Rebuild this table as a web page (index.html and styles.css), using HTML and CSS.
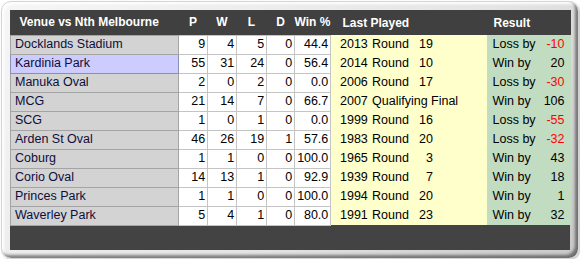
FILE: index.html
```html
<!DOCTYPE html>
<html>
<head>
<meta charset="utf-8">
<link rel="stylesheet" href="styles.css">
</head>
<body>
<div class="frame">
  <div class="panel">
    <table class="grid">
      <colgroup>
        <col class="c-venue"><col class="c-n1"><col class="c-n2"><col class="c-n3"><col class="c-n4"><col class="c-pct"><col class="c-last"><col class="c-res">
      </colgroup>
      <thead>
        <tr>
          <th class="h-venue">Venue vs Nth Melbourne</th>
          <th>P</th><th>W</th><th>L</th><th>D</th><th>Win %</th>
          <th class="h-last">Last Played</th>
          <th class="h-res">Result</th>
        </tr>
      </thead>
      <tbody>
        <tr><td class="v">Docklands Stadium</td><td class="n">9</td><td class="n">4</td><td class="n">5</td><td class="n">0</td><td class="n">44.4</td><td class="lp"><span class="yr">2013</span><span class="rd">Round</span><span class="no">19</span></td><td class="res"><span>Loss by</span><span class="neg">-10</span></td></tr>
        <tr><td class="v sel">Kardinia Park</td><td class="n">55</td><td class="n">31</td><td class="n">24</td><td class="n">0</td><td class="n">56.4</td><td class="lp"><span class="yr">2014</span><span class="rd">Round</span><span class="no">10</span></td><td class="res"><span>Win by</span><span>20</span></td></tr>
        <tr><td class="v">Manuka Oval</td><td class="n">2</td><td class="n">0</td><td class="n">2</td><td class="n">0</td><td class="n">0.0</td><td class="lp"><span class="yr">2006</span><span class="rd">Round</span><span class="no">17</span></td><td class="res"><span>Loss by</span><span class="neg">-30</span></td></tr>
        <tr><td class="v">MCG</td><td class="n">21</td><td class="n">14</td><td class="n">7</td><td class="n">0</td><td class="n">66.7</td><td class="lp"><span class="yr">2007</span>Qualifying Final</td><td class="res"><span>Win by</span><span>106</span></td></tr>
        <tr><td class="v">SCG</td><td class="n">1</td><td class="n">0</td><td class="n">1</td><td class="n">0</td><td class="n">0.0</td><td class="lp"><span class="yr">1999</span><span class="rd">Round</span><span class="no">16</span></td><td class="res"><span>Loss by</span><span class="neg">-55</span></td></tr>
        <tr><td class="v">Arden St Oval</td><td class="n">46</td><td class="n">26</td><td class="n">19</td><td class="n">1</td><td class="n">57.6</td><td class="lp"><span class="yr">1983</span><span class="rd">Round</span><span class="no">20</span></td><td class="res"><span>Loss by</span><span class="neg">-32</span></td></tr>
        <tr><td class="v">Coburg</td><td class="n">1</td><td class="n">1</td><td class="n">0</td><td class="n">0</td><td class="n">100.0</td><td class="lp"><span class="yr">1965</span><span class="rd">Round</span><span class="no">3</span></td><td class="res"><span>Win by</span><span>43</span></td></tr>
        <tr><td class="v">Corio Oval</td><td class="n">14</td><td class="n">13</td><td class="n">1</td><td class="n">0</td><td class="n">92.9</td><td class="lp"><span class="yr">1939</span><span class="rd">Round</span><span class="no">7</span></td><td class="res"><span>Win by</span><span>18</span></td></tr>
        <tr><td class="v">Princes Park</td><td class="n">1</td><td class="n">1</td><td class="n">0</td><td class="n">0</td><td class="n">100.0</td><td class="lp"><span class="yr">1994</span><span class="rd">Round</span><span class="no">20</span></td><td class="res"><span>Win by</span><span>1</span></td></tr>
        <tr><td class="v">Waverley Park</td><td class="n">5</td><td class="n">4</td><td class="n">1</td><td class="n">0</td><td class="n">80.0</td><td class="lp"><span class="yr">1991</span><span class="rd">Round</span><span class="no">23</span></td><td class="res"><span>Win by</span><span>32</span></td></tr>
      </tbody>
    </table>
  </div>
</div>
</body>
</html>
```
FILE: styles.css
```css
html, body {
  margin: 0;
  padding: 0;
  background: #ffffff;
}
body {
  font-family: "Liberation Sans", Arial, sans-serif;
}
.frame {
  margin: 1px 0 0 1px;
  width: 560px;
  height: 240px;
  padding: 8px;
  border: 1px solid #d4d4d4;
  border-radius: 10px;
  background: linear-gradient(135deg, #f6f6f6 0%, #e4e4e4 60%, #c8c8c8 100%);
  box-shadow: inset -3px -3px 3px rgba(0,0,0,0.45), inset 2px 2px 3px #ffffff, 1px 1px 2px rgba(0,0,0,0.25);
}
.panel {
  width: 560px;
  height: 240px;
  background: #434343;
}
.grid {
  width: 560px;
  table-layout: fixed;
  border-collapse: collapse;
  border-spacing: 0;
  font-size: 12.5px;
}
.c-venue { width: 168px; }
.c-n1 { width: 29px; }
.c-n2 { width: 29px; }
.c-n3 { width: 30px; }
.c-n4 { width: 28px; }
.c-pct { width: 36px; }
.c-last { width: 156px; }
.c-res { width: 84px; }

thead tr { height: 25px; }
tbody tr { height: 19px; }

th {
  padding: 0;
  color: #ffffff;
  font-weight: bold;
  font-size: 12px;
  text-align: center;
  background: #404040;
  white-space: nowrap;
}
th.h-venue { text-align: left; padding-left: 9px; }
th.h-last { text-align: left; padding-left: 12px; }
th.h-res { text-align: left; padding-left: 7px; }

td {
  padding: 0;
  line-height: 17px;
  white-space: nowrap;
  color: #000000;
}
td.v {
  background: #d3d3d3;
  border: 1px solid #a4a4a4;
  padding-left: 4px;
  color: #0e0e3c;
}
td.v.sel {
  background: #ccccff;
  border-color: #8c8cb8;
}
td.n {
  background: #ffffff;
  border: 1px solid #c4c4c4;
  text-align: right;
  padding-right: 2px;
  letter-spacing: -0.1px;
}
td.lp {
  background: #ffffcc;
  padding-left: 9px;
}
.yr {
  display: inline-block;
  width: 32px;
}
.rd {
  display: inline-block;
  width: 44px;
}
.no {
  display: inline-block;
  width: 17px;
  text-align: right;
}
td.res {
  background: #c1dcc1;
  padding: 0 6px;
}
td.res span:last-child {
  float: right;
}
.neg { color: #ff0000; }
```
